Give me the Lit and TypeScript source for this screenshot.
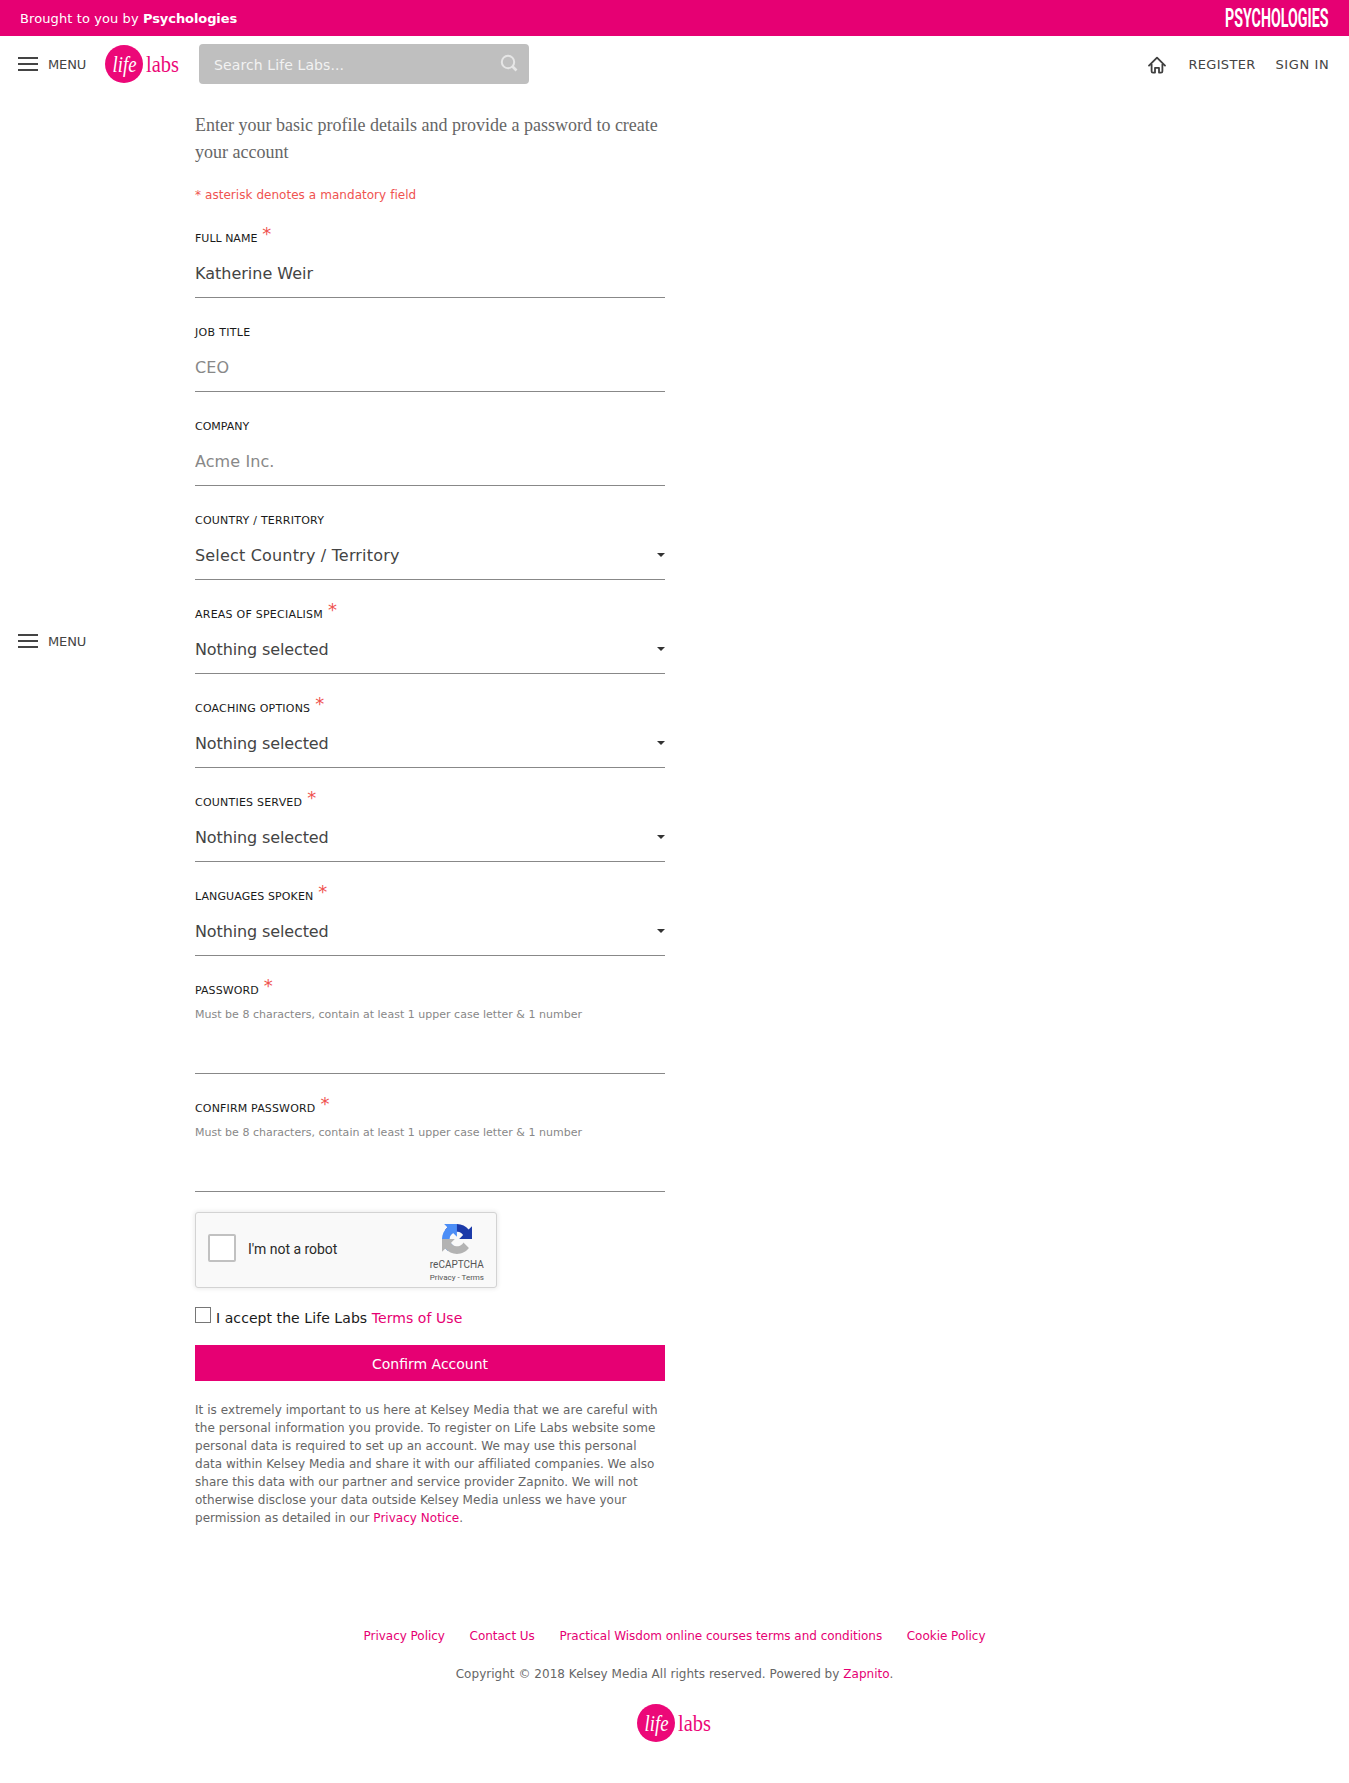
import { LitElement, html, css, nothing } from "lit";
import { customElement, property } from "lit/decorators.js";

interface Field {
  label: string;
  track: string;
  required?: boolean;
  kind: "text" | "select" | "password";
  value?: string;
  valueTrack?: string;
  placeholder?: string;
  hint?: string;
}

const HINT = "Must be 8 characters, contain at least 1 upper case letter & 1 number";
const NOTHING = "Nothing selected";

const FIELDS: Field[] = [
  { label: "FULL NAME", track: "0", required: true, kind: "text", value: "Katherine Weir" },
  { label: "JOB TITLE", track: "0.3px", kind: "text", placeholder: "CEO" },
  { label: "COMPANY", track: "0", kind: "text", placeholder: "Acme Inc." },
  { label: "COUNTRY / TERRITORY", track: "0.22px", kind: "select", value: "Select Country / Territory", valueTrack: "0.18px" },
  { label: "AREAS OF SPECIALISM", track: "0.24px", required: true, kind: "select", value: NOTHING, valueTrack: "-0.12px" },
  { label: "COACHING OPTIONS", track: "0.2px", required: true, kind: "select", value: NOTHING, valueTrack: "-0.12px" },
  { label: "COUNTIES SERVED", track: "0.22px", required: true, kind: "select", value: NOTHING, valueTrack: "-0.12px" },
  { label: "LANGUAGES SPOKEN", track: "0.1px", required: true, kind: "select", value: NOTHING, valueTrack: "-0.12px" },
  { label: "PASSWORD", track: "0.08px", required: true, kind: "password", hint: HINT },
  { label: "CONFIRM PASSWORD", track: "0.16px", required: true, kind: "password", hint: HINT },
];

@customElement("life-logo")
class LifeLogo extends LitElement {
  static styles = css`
    :host { display: block; width: 75px; height: 38px; }
    svg { display: block; overflow: visible; }
    text { font-family: "Liberation Serif", "Times New Roman", serif; }
    .life { font-size: 23.5px; font-style: italic; fill: #fff; }
    .labs { font-size: 22.5px; fill: #ec0878; }
  `;
  render() {
    return html`<svg width="75" height="38" viewBox="0 0 75 38">
      <circle cx="19" cy="19" r="19" fill="#ec0878"></circle>
      <text class="life" x="7.5" y="26.5" textLength="24" lengthAdjust="spacingAndGlyphs">life</text>
      <text class="labs" x="41" y="26.5" textLength="33" lengthAdjust="spacingAndGlyphs">labs</text>
    </svg>`;
  }
}

@customElement("menu-button")
class MenuButton extends LitElement {
  static styles = css`
    :host { display: flex; align-items: center; gap: 10px; height: 40px; color: #444;
      font: 13px/40px "DejaVu Sans", Verdana, sans-serif; letter-spacing: -0.15px; }
    .bars { display: flex; flex-direction: column; gap: 4px; width: 20px; }
    .bar { height: 2px; background: #444; }
    .text { padding-top: 1px; }
  `;
  render() {
    return html`<div class="bars"><div class="bar"></div><div class="bar"></div><div class="bar"></div></div><span class="text">MENU</span>`;
  }
}

@customElement("form-field")
class FormField extends LitElement {
  @property({ attribute: false }) field!: Field;
  static styles = css`
    :host { display: block; padding-top: 25px; font-family: "DejaVu Sans", Verdana, sans-serif; }
    .label { height: 20px; margin-bottom: 1px; font-size: 11px; line-height: 20px; color: #1a1a1a; white-space: nowrap; }
    .star { margin-left: 5px; font-size: 18px; line-height: 0; color: #ef5350; vertical-align: 2px; }
    .hint { height: 23px; padding-top: 1px; font-size: 11px; line-height: 24px; color: #888; letter-spacing: 0.016px; white-space: nowrap; }
    .control { display: flex; align-items: center; justify-content: space-between; box-sizing: border-box; height: 48px;
      border: 0; border-bottom: 1px solid #888; font-size: 16px; color: #444; }
    input { width: 100%; padding: 0; margin: 0; border-radius: 0; background: transparent; outline: 0; font-family: inherit; }
    input::placeholder { color: #888; opacity: 1; letter-spacing: 0.08px; }
    .caret { width: 0; height: 0; border: 4px solid transparent; border-top-color: #333; border-bottom: 0; margin-top: -1px; }
  `;
  render() {
    const f = this.field;
    return html`
      <div class="label"><span style="letter-spacing:${f.track}">${f.label}</span>${f.required ? html`<span class="star">*</span>` : nothing}</div>
      ${f.hint ? html`<div class="hint">${f.hint}</div>` : nothing}
      ${f.kind === "select"
        ? html`<div class="control"><span style="letter-spacing:${f.valueTrack ?? "0"}">${f.value}</span><span class="caret"></span></div>`
        : html`<input class="control" type=${f.kind} .value=${f.value ?? ""} placeholder=${f.placeholder ?? ""} />`}
    `;
  }
}

@customElement("robot-check")
class RobotCheck extends LitElement {
  static styles = css`
    :host { display: flex; align-items: center; box-sizing: border-box; width: 302px; height: 76px; padding: 0 12px;
      border: 1px solid #d3d3d3; border-radius: 3px; background: #f9f9f9; box-shadow: 0 0 4px 1px rgba(0, 0, 0, 0.08);
      font-family: Roboto, sans-serif; }
    .box { box-sizing: border-box; width: 28px; height: 28px; margin: -4px 12px 0 0; border: 2px solid #c1c1c1; border-radius: 2px; background: #fff; }
    .text { flex: 1; margin-top: -2px; font-size: 14px; line-height: 20px; color: #2a2a2a; letter-spacing: -0.03px; }
    .brand { display: flex; flex-direction: column; align-items: center; padding-top: 6px; color: #555; white-space: nowrap; }
    svg { display: block; margin-bottom: 4px; }
    .name { font-size: 10px; line-height: 13px; }
    .links { padding-top: 1px; font-size: 8px; line-height: 11px; }
  `;
  render() {
    return html`
      <div class="box"></div>
      <div class="text">I'm not a robot</div>
      <div class="brand">
        <svg width="30" height="30" viewBox="0 0 64 64">
          <path fill="#1c3aa9" d="M64 31.955l-.033-1.37V4.687l-7.16 7.16C50.948 4.674 42.033.093 32.05.093c-10.4 0-19.622 4.96-25.458 12.64l11.736 11.86a15.55 15.55 0 0 1 4.754-5.334c2.05-1.6 4.952-2.906 8.968-2.906.485 0 .86.057 1.135.163 4.976.393 9.288 3.14 11.828 7.124l-8.307 8.307L64 31.953"></path>
          <path fill="#4c8ef7" d="M31.862.094l-1.37.033H4.594l7.16 7.16C4.58 13.147 0 22.06 0 32.046c0 10.4 4.96 19.622 12.64 25.458L24.5 45.768a15.55 15.55 0 0 1-5.334-4.754c-1.6-2.05-2.906-4.952-2.906-8.968 0-.485.057-.86.163-1.135.393-4.976 3.14-9.288 7.124-11.828l8.307 8.307L31.86.095"></path>
          <path fill="#b3b3b3" d="M.001 32.045l.033 1.37v25.898l7.16-7.16c5.86 7.173 14.774 11.754 24.76 11.754 10.4 0 19.622-4.96 25.458-12.64l-11.736-11.86a15.55 15.55 0 0 1-4.754 5.334c-2.05 1.6-4.952 2.906-8.968 2.906-.485 0-.86-.057-1.135-.163-4.976-.393-9.288-3.14-11.828-7.124l8.307-8.307c-10.522.04-22.4.066-27.295-.005"></path>
        </svg>
        <div class="name">reCAPTCHA</div>
        <div class="links">Privacy - Terms</div>
      </div>
    `;
  }
}

@customElement("app-root")
class AppRoot extends LitElement {
  static styles = css`
    :host { display: block; min-height: 1783px; background: #fff; color: #666; font: 12px/18px "DejaVu Sans", Verdana, sans-serif; }
    .pink { color: #e60073; }
    .banner { display: flex; align-items: center; justify-content: space-between; height: 36px; padding: 0 20px;
      background: #e60073; color: #fff; font-size: 13px; letter-spacing: 0.1px; }
    .brought { padding-top: 1px; }
    .banner b { letter-spacing: -0.08px; }
    .banner svg { display: block; overflow: visible; }
    .banner text { font: bold 26px Roboto, sans-serif; letter-spacing: 0; fill: #fff; }
    .nav { display: flex; align-items: center; height: 56px; padding: 0 20px 0 18px; color: #444; font-size: 13px; }
    .nav life-logo { margin-left: 19px; }
    .search { display: flex; align-items: center; justify-content: space-between; box-sizing: border-box; width: 330px; height: 40px;
      margin-left: 19px; padding: 1px 11px 0 15px; border-radius: 4px; background: #bfbfbf; color: #f2f2f2; font-size: 14px; letter-spacing: 0.1px; }
    .search svg { margin-top: -4px; }
    .links { display: flex; align-items: center; margin-left: auto; }
    .home { margin-top: 1px; }
    .register { margin-left: 23px; padding-top: 1px; letter-spacing: 0.3px; }
    .signin { margin-left: 20px; padding-top: 1px; letter-spacing: 0.6px; margin-right: -0.3px; }
    .body { display: grid; grid-template-columns: 194.5px 470.5px; }
    .side { padding: 529px 0 0 18px; }
    .form { padding: 20px 0 0 0.5px; }
    .intro { margin: 0 0 20px; font: 18px/27px "Liberation Serif", "Times New Roman", serif; white-space: nowrap; }
    .note { color: #ef5350; letter-spacing: 0.02px; word-spacing: 0.2px; }
    robot-check { margin-top: 20px; }
    .accept { display: flex; align-items: center; gap: 5px; height: 34px; margin: 13px 0 10px; font-size: 14px; color: #1a1a1a; letter-spacing: 0.07px; }
    .tick { box-sizing: border-box; width: 16px; height: 16px; margin-top: -6px; border: 1px solid #767676; background: #fff; }
    .confirm { display: block; width: 470px; height: 36px; margin: 0; padding: 2px 0 0; border: 0; background: #e60073; color: #fff;
      font: 14px/34px "DejaVu Sans", Verdana, sans-serif; text-align: center; }
    .privacy { margin: 20px 0 0; letter-spacing: 0.02px; white-space: nowrap; }
    .wide { letter-spacing: 0.055px; }
    .footer { display: flex; flex-direction: column; align-items: center; padding-top: 100px; }
    .policies { display: flex; gap: 24.6px; letter-spacing: -0.025px; }
    .copy { margin: 20px 0 21px; letter-spacing: 0.03px; }
  `;
  render() {
    return html`
      <div class="banner">
        <div class="brought">Brought to you by <b>Psychologies</b></div>
        <svg width="104" height="24" viewBox="0 0 104 24"><text x="0" y="21.3" textLength="103.5" lengthAdjust="spacingAndGlyphs">PSYCHOLOGIES</text></svg>
      </div>
      <div class="nav">
        <menu-button></menu-button>
        <life-logo></life-logo>
        <div class="search">
          <span>Search Life Labs...</span>
          <svg width="18" height="18" viewBox="0 0 18 18" fill="none" stroke="#e6e6e6" stroke-width="2"><circle cx="8" cy="8" r="6.2"></circle><path d="M12.5 12.5L16.5 16.5" stroke-width="2.6"></path></svg>
        </div>
        <div class="links">
          <svg class="home" width="18" height="18" viewBox="0 0 18 18" fill="none" stroke="#3f3f3f" stroke-width="1.8" stroke-linejoin="round" stroke-linecap="round"><path d="M1 9.6L9 1.6L17 9.6M3.6 8.2V15.2Q3.6 16.6 5 16.6H7V11.8H11V16.6H13Q14.4 16.6 14.4 15.2V8.2"></path></svg>
          <span class="register">REGISTER</span>
          <span class="signin">SIGN IN</span>
        </div>
      </div>
      <div class="body">
        <div class="side"><menu-button></menu-button></div>
        <div class="form">
          <p class="intro">Enter your basic profile details and provide a password to create<br />your account</p>
          <div class="note">* asterisk denotes a mandatory field</div>
          ${FIELDS.map((f) => html`<form-field .field=${f}></form-field>`)}
          <robot-check></robot-check>
          <div class="accept"><span class="tick"></span><span>I accept the Life Labs <span class="pink">Terms of Use</span></span></div>
          <button class="confirm">Confirm Account</button>
          <p class="privacy"><span class="wide">It is extremely important to us here at Kelsey Media that we are careful with<br />the personal information you provide. To register on Life Labs website some</span><br />personal data is required to set up an account. We may use this personal<br />data within Kelsey Media and share it with our affiliated companies. We also<br />share this data with our partner and service provider Zapnito. We will not<br />otherwise disclose your data outside Kelsey Media unless we have your<br />permission as detailed in our <span class="pink">Privacy Notice</span>.</p>
        </div>
      </div>
      <div class="footer">
        <div class="policies pink"><span>Privacy Policy</span><span>Contact Us</span><span>Practical Wisdom online courses terms and conditions</span><span>Cookie Policy</span></div>
        <div class="copy">Copyright © 2018 Kelsey Media All rights reserved. Powered by <span class="pink">Zapnito</span>.</div>
        <life-logo></life-logo>
      </div>
    `;
  }
}
